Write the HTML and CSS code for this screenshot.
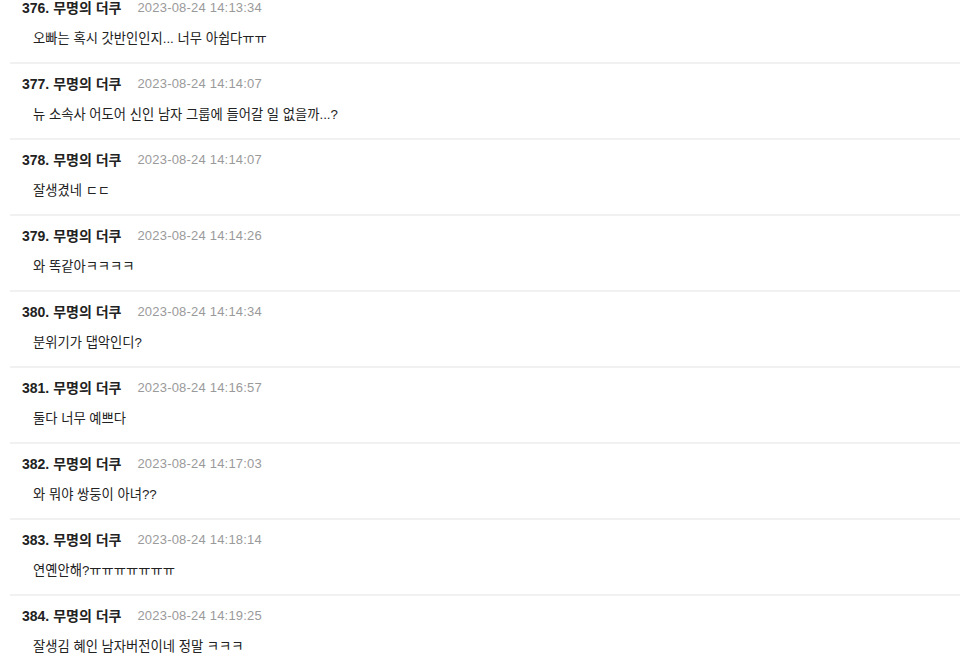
FILE: index.html
```html
<!DOCTYPE html>
<html>
<head>
  <title>댓글</title>
  <link rel="stylesheet" href="styles.css">
</head>
<body>
  <div class="comment-list">
    <div class="comment">
      <div class="comment-head"><span class="writer">376. 무명의 더쿠</span><span class="date">2023-08-24 14:13:34</span></div>
      <div class="comment-body">오빠는 혹시 갓반인인지... 너무 아쉽다ㅠㅠ</div>
    </div>
    <div class="comment">
      <div class="comment-head"><span class="writer">377. 무명의 더쿠</span><span class="date">2023-08-24 14:14:07</span></div>
      <div class="comment-body">뉴 소속사 어도어 신인 남자 그룹에 들어갈 일 없을까...?</div>
    </div>
    <div class="comment">
      <div class="comment-head"><span class="writer">378. 무명의 더쿠</span><span class="date">2023-08-24 14:14:07</span></div>
      <div class="comment-body">잘생겼네 ㄷㄷ</div>
    </div>
    <div class="comment">
      <div class="comment-head"><span class="writer">379. 무명의 더쿠</span><span class="date">2023-08-24 14:14:26</span></div>
      <div class="comment-body">와 똑같아ㅋㅋㅋㅋ</div>
    </div>
    <div class="comment">
      <div class="comment-head"><span class="writer">380. 무명의 더쿠</span><span class="date">2023-08-24 14:14:34</span></div>
      <div class="comment-body">분위기가 댑악인디?</div>
    </div>
    <div class="comment">
      <div class="comment-head"><span class="writer">381. 무명의 더쿠</span><span class="date">2023-08-24 14:16:57</span></div>
      <div class="comment-body">둘다 너무 예쁘다</div>
    </div>
    <div class="comment">
      <div class="comment-head"><span class="writer">382. 무명의 더쿠</span><span class="date">2023-08-24 14:17:03</span></div>
      <div class="comment-body">와 뭐야 쌍둥이 아녀??</div>
    </div>
    <div class="comment">
      <div class="comment-head"><span class="writer">383. 무명의 더쿠</span><span class="date">2023-08-24 14:18:14</span></div>
      <div class="comment-body">연옌안해?ㅠㅠㅠㅠㅠㅠㅠ</div>
    </div>
    <div class="comment">
      <div class="comment-head"><span class="writer">384. 무명의 더쿠</span><span class="date">2023-08-24 14:19:25</span></div>
      <div class="comment-body">잘생김 혜인 남자버전이네 정말 ㅋㅋㅋ</div>
    </div>
  </div>
</body>
</html>
```
FILE: styles.css
```css
body {
  margin: 0;
  background: #fff;
  color: #222;
  font-family: "Liberation Sans", "Noto Sans CJK KR", sans-serif;
  overflow: hidden;
}
.comment-list {
  margin: -14px 0 0 10px;
}
.comment {
  border-top: 2px solid #f1f1f1;
  padding: 9px 0 13px 12px;
}
.comment-head {
  display: flex;
  align-items: center;
  height: 20px;
}
.writer {
  font-size: 14px;
  font-weight: bold;
  color: #222;
}
.date {
  margin-left: 16px;
  font-size: 13px;
  letter-spacing: 0.2px;
  color: #9a9a9a;
}
.comment-body {
  margin-top: 12px;
  padding-left: 11px;
  height: 20px;
  line-height: 20px;
  font-size: 13.3px;
  color: #222;
}
```
